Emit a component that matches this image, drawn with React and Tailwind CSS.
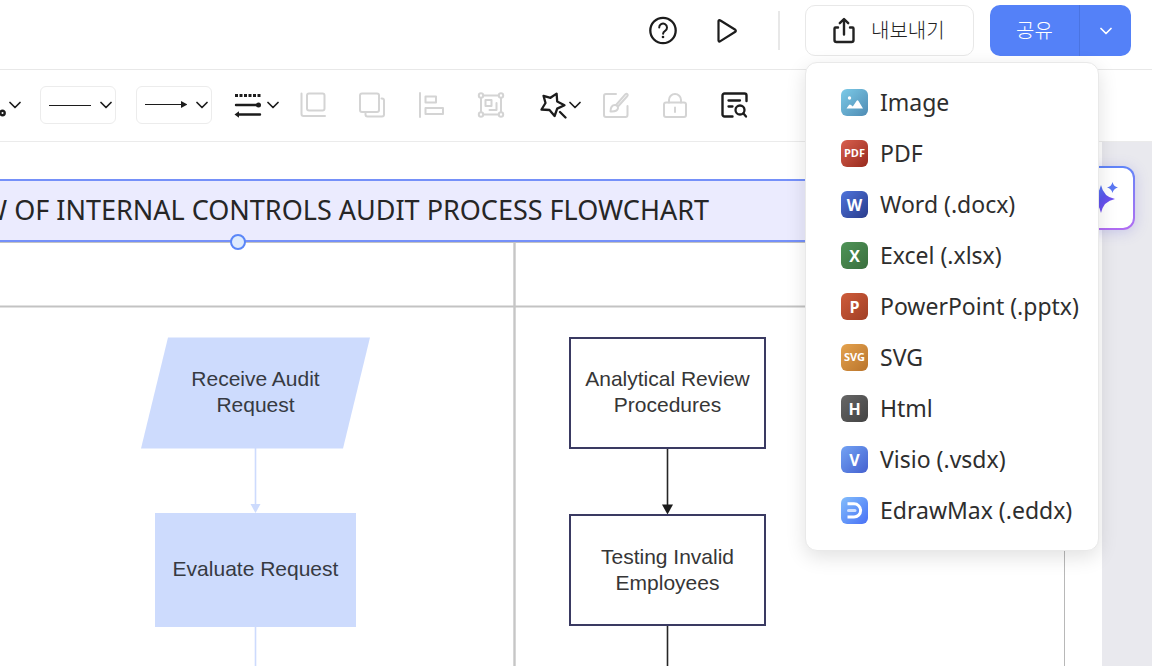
import React from "react";

const exportFormats = [
  { label: "Image", tile: "from-[#7ccbe8] to-[#4f8bb3]" },
  { label: "PDF", tile: "from-[#d9604f] to-[#97291c]", mark: "PDF", small: true },
  { label: "Word (.docx)", tile: "from-[#4f74dc] to-[#2a3c8c]", mark: "W" },
  { label: "Excel (.xlsx)", tile: "from-[#4f9457] to-[#3a6f3e]", mark: "X" },
  { label: "PowerPoint (.pptx)", tile: "from-[#cf5c3a] to-[#a03f26]", mark: "P" },
  { label: "SVG", tile: "from-[#e5a34e] to-[#b9742b]", mark: "SVG", small: true },
  { label: "Html", tile: "from-[#676767] to-[#434343]", mark: "H" },
  { label: "Visio (.vsdx)", tile: "from-[#74a3f4] to-[#4560cf]", mark: "V" },
  { label: "EdrawMax (.eddx)", tile: "from-[#84bdfb] to-[#4a6ff5]" },
];

function Icon({ children, className = "", width = 28, height = 28 }) {
  return (
    <svg
      width={width}
      height={height}
      viewBox={`0 0 ${width} ${height}`}
      fill="none"
      stroke="currentColor"
      strokeWidth="2"
      strokeLinecap="round"
      strokeLinejoin="round"
      aria-hidden="true"
      className={`shrink-0 ${className}`}
    >
      {children}
    </svg>
  );
}

function Chevron({ className = "" }) {
  return (
    <Icon width={12} height={8} className={className}>
      <path d="M1 1.5 6 6.5 11 1.5" strokeWidth="1.7" />
    </Icon>
  );
}

function ToolButton({ label, disabled, className = "", children }) {
  return (
    <button
      type="button"
      aria-label={label}
      disabled={disabled}
      className={`flex shrink-0 items-center text-[#1c1c1c] disabled:text-[#d4d4d4] ${className}`}
    >
      {children}
    </button>
  );
}

function FormatIcon({ format }) {
  return (
    <span
      className={`flex h-[27px] w-[27px] shrink-0 items-center justify-center rounded-md bg-linear-to-br font-['Open_Sans',sans-serif] font-bold text-white ${format.tile} ${
        format.small ? "text-[11px]" : "text-[16px]"
      }`}
      aria-hidden="true"
    >
      {format.mark}
      {format.label === "Image" && (
        <svg width="27" height="27" viewBox="0 0 27 27" fill="#fff">
          <circle cx="8.5" cy="9" r="1.7" />
          <path d="M5.5 19.5 7.8 16.2q1-1.300 2.200-.200l1.800 1.600 3.700-5.600q1-1.300 2 0l4.500 7.500z" />
        </svg>
      )}
      {format.label.startsWith("EdrawMax") && (
        <svg width="27" height="27" viewBox="0 0 27 27" fill="none" stroke="#fff" strokeWidth="3">
          <path d="M6.5 6.8H13a6.6 6.6 0 0 1 0 13.2H6.5" />
          <path d="M7.5 13.4H14" stroke="#cfe0ff" strokeLinecap="round" />
        </svg>
      )}
    </span>
  );
}

function ExportMenu() {
  return (
    <div
      role="menu"
      className="absolute left-0 top-[57px] z-20 w-[294px] rounded-xl border border-[#e9e9e9] bg-white py-3.5 shadow-[0_6px_20px_rgba(0,0,0,0.12)]"
    >
      {exportFormats.map((format) => (
        <button
          key={format.label}
          type="button"
          role="menuitem"
          className="flex h-[51px] w-full items-center gap-3 whitespace-nowrap pl-[35px] text-left text-[23px] text-[#2e2e2e] hover:bg-gray-50"
        >
          <FormatIcon format={format} />
          {format.label}
        </button>
      ))}
    </div>
  );
}

function Header() {
  return (
    <header className="flex h-[70px] shrink-0 items-start justify-end border-b border-[#e8e8e8] bg-white pr-[21px] pt-[5px]">
      <div className="flex h-[51px] items-center">
        <ToolButton label="Help">
          <Icon width={30} height={30}>
            <circle cx="15" cy="14.5" r="12.7" strokeWidth="2.3" />
            <path d="M11.2 11.5a3.9 3.9 0 1 1 5.9 3.3c-1.3.8-2 1.4-2 2.9" />
            <circle cx="15" cy="21" r="1.3" fill="currentColor" stroke="none" />
          </Icon>
        </ToolButton>
        <ToolButton label="Present" className="ml-[37px]">
          <Icon width={28} height={30}>
            <path d="M3.5 5v19.6c0 .8.9 1.3 1.5.8l15.300-9.600c.7-.4.7-1.500 0-2L5 4.200c-.6-.4-1.500.1-1.500.8Z" strokeWidth="2.200" />
          </Icon>
        </ToolButton>
        <span className="ml-[35px] h-[39px] w-0.5 bg-[#e8e8e8]" />
      </div>
      <div className="relative ml-[25px]">
        <button
          type="button"
          aria-haspopup="menu"
          aria-expanded="true"
          className="flex h-[51px] w-[169px] items-center rounded-[10px] border border-[#e8e8e8] pl-6 text-[20px] font-light text-[#222]"
        >
          <Icon className="mr-[13px]">
            <path d="M8 10.500H5.500a1 1 0 0 0-1 1v11.500a2 2 0 0 0 2 2h15a2 2 0 0 0 2-2V11.500a1 1 0 0 0-1-1H20" strokeWidth="2.400" />
            <path d="M14 17.500V2.500M9.800 6.200 14 2l4.200 4.200" strokeWidth="2.400" />
          </Icon>
          내보내기
        </button>
        <ExportMenu />
      </div>
      <div className="ml-4 flex h-[51px] overflow-hidden rounded-[10px] bg-[#5481f8] text-white">
        <button type="button" className="w-[90px] border-r border-[#4a74e2] text-[20px] font-light">
          공유
        </button>
        <button type="button" aria-label="Share options" className="flex w-[51px] items-center justify-center">
          <Chevron />
        </button>
      </div>
    </header>
  );
}

function Toolbar() {
  return (
    <div className="flex h-[72px] shrink-0 items-center overflow-hidden border-b border-[#ebebeb] bg-white pb-0.5">
      <ToolButton label="Connector" className="h-[38px]">
        <Icon width={9} height={38}>
          <circle cx="2.500" cy="27" r="2.200" strokeWidth="2.400" />
        </Icon>
        <Chevron />
      </ToolButton>
      <ToolButton label="Line style" className="ml-[19px] h-[38px] w-[76px] rounded-md border border-[#ececec] pl-2">
        <Icon width={42} height={12}>
          <path d="M0 6.500h42" strokeWidth="1" strokeLinecap="butt" />
        </Icon>
        <Chevron className="ml-[9px]" />
      </ToolButton>
      <ToolButton label="Arrow style" className="ml-5 h-[38px] w-[76px] rounded-md border border-[#ececec] pl-2">
        <Icon width={42} height={12}>
          <path d="M0 5.500h37" strokeWidth="1" strokeLinecap="butt" />
          <path d="M36 2v7l6.500-3.500z" fill="currentColor" stroke="none" />
        </Icon>
        <Chevron className="ml-[9px]" />
      </ToolButton>
      <ToolButton label="Line format" className="ml-[22px] gap-[5px]">
        <Icon>
          <path d="M1 4.500h26" strokeWidth="3" strokeDasharray="3 1.500" strokeLinecap="butt" />
          <path d="M2 14h23M5 23.500h21" strokeWidth="2.400" />
          <circle cx="24.500" cy="14" r="2.500" fill="currentColor" stroke="none" />
          <path d="M.5 23.500l4.500-3.200v6.400z" fill="currentColor" stroke="none" />
        </Icon>
        <Chevron />
      </ToolButton>
      <div className="ml-[21px] flex shrink-0 gap-[31px]">
        <ToolButton label="Bring to front" disabled>
          <Icon>
            <rect x="7" y="2.500" width="17.500" height="17" rx="2" />
            <path d="M1.500 2.500v20.500a2 2 0 0 0 2 2H25" />
          </Icon>
        </ToolButton>
        <ToolButton label="Send to back" disabled>
          <Icon>
            <rect x="1" y="2.500" width="19" height="18.500" rx="2" />
            <path d="M22.500 7.500h.5a2 2 0 0 1 2 2v14a2 2 0 0 1-2 2H8.500a2 2 0 0 1-2-2v-1" />
          </Icon>
        </ToolButton>
        <ToolButton label="Align" disabled>
          <Icon>
            <path d="M2 2v24" />
            <path d="M7.500 5.500h10.500v6h-10.500zM7.500 17h17.500v6H7.500z" />
          </Icon>
        </ToolButton>
        <ToolButton label="Group" disabled>
          <Icon>
            <path d="M4 7v14M24 7v14M6.500 4.500h15M6.500 23.500h15" />
            <circle cx="4" cy="4.500" r="2.200" />
            <circle cx="24" cy="4.500" r="2.200" />
            <circle cx="4" cy="23.500" r="2.200" />
            <circle cx="24" cy="23.500" r="2.200" />
            <path d="M8.500 9h6v6h-6zM19.500 12v7H12.500" />
          </Icon>
        </ToolButton>
      </div>
      <ToolButton label="Effects" className="ml-[34px] gap-0.5">
        <Icon>
          <path
            d="M17.600 2.600 18.200 10.500 25.500 14.200 18.200 17.600 15.600 25 10.500 19 2.500 18.500 6.500 12 4.500 4.800 11.500 6.800Z"
            strokeWidth="2.300"
          />
          <path d="M21 21 26.500 26.500" strokeWidth="2.300" />
        </Icon>
        <Chevron />
      </ToolButton>
      <div className="ml-[21px] flex shrink-0 gap-[31px]">
        <ToolButton label="Edit style" disabled>
          <Icon>
            <path d="M14 3H4a2 2 0 0 0-2 2v19a2 2 0 0 0 2 2h19.500a2 2 0 0 0 2-2V15" />
            <path d="M14.500 13.500 23.500 3.200c1.400-1.200 3 .400 1.900 1.800l-9.400 10.500M8.500 20.500c0-4 1.400-6.500 4.500-6.500 2 0 3.200 1.500 3 3.200-.300 2.700-3.500 3.500-7.500 3.300Z" />
          </Icon>
        </ToolButton>
        <ToolButton label="Lock" disabled>
          <Icon>
            <rect x="3" y="11.500" width="22" height="14.500" rx="2" />
            <path d="M8 11.500V9a6 6 0 0 1 12 0v2.500M14 16.500v4.500" />
          </Icon>
        </ToolButton>
        <ToolButton label="Find">
          <Icon>
            <path d="M12.500 25.500H4.500a2 2 0 0 1-2-2V4.500a2 2 0 0 1 2-2h20a2 2 0 0 1 2 2V10" strokeWidth="2.400" />
            <path d="M8.500 9.500h11.500M8.500 15.500h4" strokeWidth="2.300" />
            <circle cx="20" cy="19" r="4.500" strokeWidth="2.300" />
            <path d="M23.500 22.500 26 25.500" strokeWidth="2.300" />
          </Icon>
        </ToolButton>
      </div>
    </div>
  );
}

function Canvas() {
  return (
    <main className="relative flex-1 overflow-hidden bg-[#e9e9ee] pr-[50px]">
      <div className="relative h-full min-h-[524px] overflow-hidden bg-white">
        {/* swimlanes and connectors */}
        <svg className="absolute inset-0 h-full w-full" aria-hidden="true">
          <g stroke="#c3c3c3">
            <path d="M0 100.500H1065" />
            <path d="M0 164.500H1065" strokeWidth="2" />
          </g>
          <line x1="514.500" y1="101" x2="514.500" y2="100%" stroke="#c6c6c6" strokeWidth="2.400" />
          <line x1="1064.500" y1="101" x2="1064.500" y2="100%" stroke="#b8b8b8" />
          <path d="M168 195.500H370L343 306.500H141Z" fill="#cddbfd" />
          <g stroke="#cddbfd" fill="#cddbfd">
            <line x1="255.500" y1="306" x2="255.500" y2="362" strokeWidth="1.600" />
            <path d="M250.500 362h10l-5 9z" stroke="none" />
            <line x1="255.500" y1="484" x2="255.500" y2="100%" strokeWidth="1.600" />
          </g>
          <g stroke="#262626" fill="#1c1c1c">
            <line x1="667.500" y1="306" x2="667.500" y2="363" strokeWidth="1.600" />
            <path d="M662 362.500h11l-5.500 10z" stroke="none" />
            <line x1="667.500" y1="483" x2="667.500" y2="100%" strokeWidth="1.600" />
          </g>
        </svg>

        {/* selected title bar, it runs on past the left edge */}
        <div className="absolute left-0 right-[37px] top-[37px] flex h-[63px] items-center border-y-2 border-[#7590f9] bg-[#ebebfe] pb-0.5">
          <h1 className="flex w-[709px] justify-end whitespace-nowrap text-[27px] leading-9 text-[#262626]">
            W OF INTERNAL CONTROLS AUDIT PROCESS FLOWCHART
          </h1>
        </div>
        <span className="absolute left-[230px] top-[92px] h-4 w-4 rounded-full border-2 border-[#5a86f8] bg-[#deebfd]" />

        <div className="absolute left-[155px] top-[195px] flex h-[111px] w-[201px] items-center justify-center px-6 pb-0.5 text-center font-['Liberation_Sans',sans-serif] text-[21px] leading-[26px] text-[#363a42]">
          Receive Audit Request
        </div>
        <div className="absolute left-[155px] top-[371px] flex h-[114px] w-[201px] items-center justify-center bg-[#cddbfd] pb-0.5 text-center font-['Liberation_Sans',sans-serif] text-[21px] leading-[26px] text-[#363a42]">
          Evaluate Request
        </div>
        <div className="absolute left-[569px] top-[195px] flex h-[112px] w-[197px] items-center justify-center border-2 border-[#3a3a62] bg-white pb-0.5 text-center font-['Liberation_Sans',sans-serif] text-[21px] leading-[26px] text-[#363636]">
          Analytical Review Procedures
        </div>
        <div className="absolute left-[569px] top-[372px] flex h-[112px] w-[197px] items-center justify-center border-2 border-[#3a3a62] bg-white px-5 text-center font-['Liberation_Sans',sans-serif] text-[21px] leading-[26px] text-[#363636]">
          Testing Invalid Employees
        </div>
      </div>

      <button
        type="button"
        aria-label="AI assistant"
        className="absolute right-[17px] top-6 h-16 w-16 rounded-xl bg-linear-to-b from-[#5f84f8] to-[#b06cf2] p-0.5 shadow-[0_2px_14px_rgba(95,90,220,0.25)]"
      >
        <span className="flex h-full w-full items-center justify-center rounded-[10px] bg-white">
          <svg width="40" height="40" viewBox="0 0 40 40" aria-hidden="true">
            <defs>
              <linearGradient id="spark" x1="0" y1="0" x2="1" y2="1">
                <stop offset="0" stopColor="#4f9bf8" />
                <stop offset="0.500" stopColor="#5c55ee" />
                <stop offset="1" stopColor="#8b45f0" />
              </linearGradient>
            </defs>
            <path d="M18 7q2.500 12 14 14-11.500 2-14 14-2.500-12-14-14 11.500-2 14-14Z" fill="url(#spark)" />
            <path d="M29.500 4q1 4.500 5.500 5.500-4.500 1-5.500 5.500-1-4.500-5.500-5.500 4.500-1 5.500-5.500Z" fill="#5b78f3" />
          </svg>
        </span>
      </button>
    </main>
  );
}

export default function App() {
  return (
    <div className="flex min-h-screen flex-col overflow-hidden bg-white font-['Noto_Sans','Noto_Sans_CJK_KR',sans-serif]">
      <Header />
      <Toolbar />
      <Canvas />
    </div>
  );
}
